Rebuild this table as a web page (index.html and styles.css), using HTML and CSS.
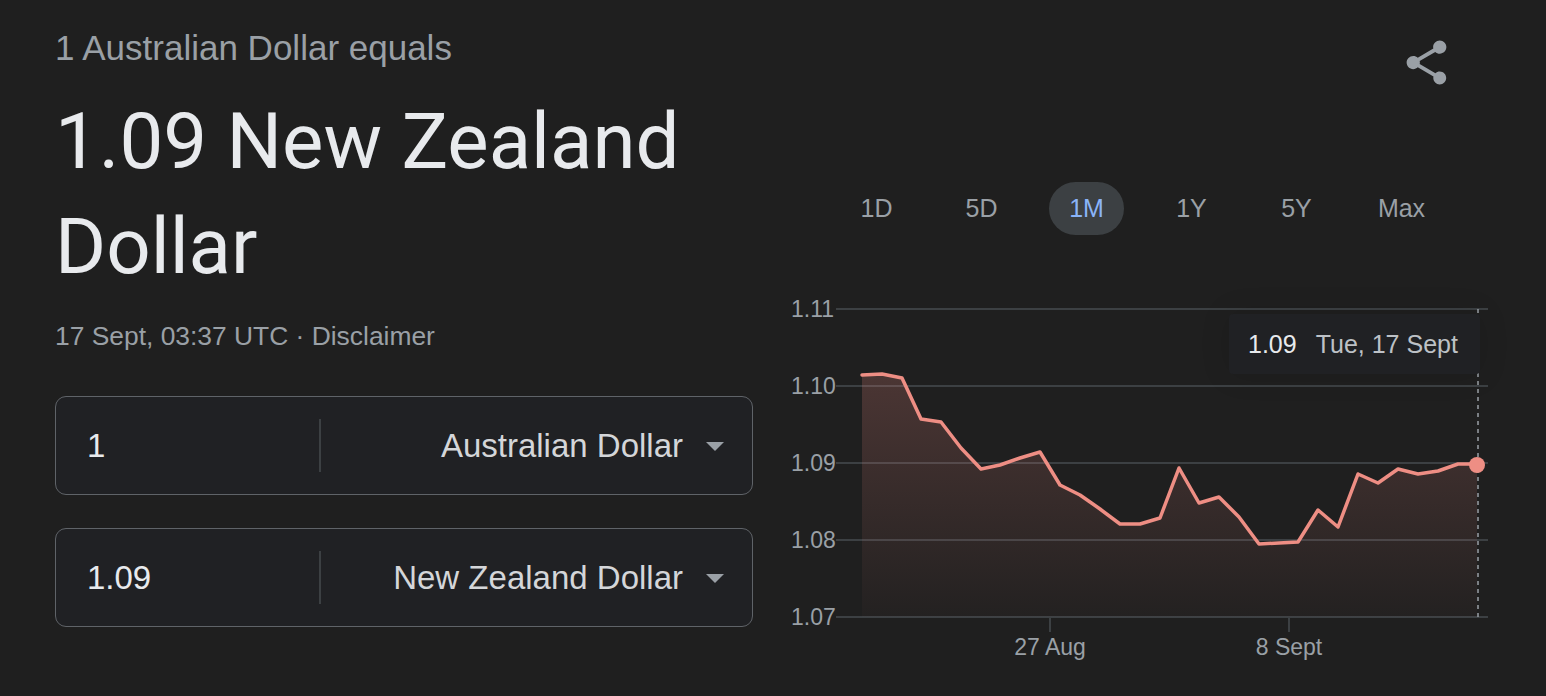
FILE: index.html
```html
<!DOCTYPE html>
<html lang="en">
<head>
<meta charset="utf-8">
<title>AUD to NZD</title>
<link rel="stylesheet" href="styles.css">
</head>
<body>
<div class="page">
  <section class="left">
    <div class="subtitle">1 Australian Dollar equals</div>
    <h1 class="heading">1.09 New Zealand Dollar</h1>
    <div class="date">17 Sept, 03:37 UTC · <span class="disclaimer">Disclaimer</span></div>

    <div class="conv">
      <div class="conv-amount">1</div>
      <div class="conv-divider"></div>
      <div class="conv-currency">
        <span class="conv-name">Australian Dollar</span>
        <span class="caret"></span>
      </div>
    </div>

    <div class="conv conv-second">
      <div class="conv-amount">1.09</div>
      <div class="conv-divider"></div>
      <div class="conv-currency">
        <span class="conv-name">New Zealand Dollar</span>
        <span class="caret"></span>
      </div>
    </div>
  </section>

  <section class="right">
    <div class="share-row">
      <svg class="share" viewBox="0 0 24 24" aria-label="Share">
        <path d="M18 16.08c-.76 0-1.440.3-1.96.77L8.91 12.7c.05-.23.09-.46.09-.7s-.04-.47-.09-.7l7.05-4.11c.54.5 1.25.81 2.040.81 1.66 0 3-1.34 3-3s-1.34-3-3-3-3 1.34-3 3c0 .24.04.47.09.7L8.04 9.81C7.5 9.31 6.79 9 6 9c-1.66 0-3 1.34-3 3s1.34 3 3 3c.79 0 1.5-.31 2.04-.81l7.12 4.16c-.05.21-.08.43-.08.65 0 1.61 1.31 2.92 2.92 2.92 1.61 0 2.92-1.31 2.92-2.92s-1.31-2.920-2.92-2.92z"/>
      </svg>
    </div>

    <div class="tabs">
      <span class="tab">1D</span>
      <span class="tab">5D</span>
      <span class="tab tab-active">1M</span>
      <span class="tab">1Y</span>
      <span class="tab">5Y</span>
      <span class="tab">Max</span>
    </div>

    <div class="chart">
      <svg class="chart-svg" viewBox="0 0 720 380" width="720" height="380">
        <defs>
          <linearGradient id="fillGrad" x1="0" y1="84" x2="0" y2="327" gradientUnits="userSpaceOnUse">
            <stop offset="0" stop-color="#f28b82" stop-opacity="0.21"/>
            <stop offset="1" stop-color="#f28b82" stop-opacity="0.02"/>
          </linearGradient>
        </defs>
        <g class="grid">
          <line x1="56" y1="19" x2="708" y2="19"/>
          <line x1="56" y1="96" x2="708" y2="96"/>
          <line x1="56" y1="173" x2="708" y2="173"/>
          <line x1="56" y1="250" x2="708" y2="250"/>
          <line x1="56" y1="327" x2="708" y2="327"/>
          <line x1="270" y1="327" x2="270" y2="342"/>
          <line x1="509" y1="327" x2="509" y2="342"/>
        </g>
        <g class="ylabels">
          <text x="11" y="27">1.11</text>
          <text x="11" y="104">1.10</text>
          <text x="11" y="181">1.09</text>
          <text x="11" y="258">1.08</text>
          <text x="11" y="335">1.07</text>
        </g>
        <g class="xlabels">
          <text x="270" y="365">27 Aug</text>
          <text x="509" y="365">8 Sept</text>
        </g>
        <polygon class="area" fill="url(#fillGrad)" points="82,85 102,84 122,88 141,129 161,132 181,158 201,179 220,175 240,168 260,162 280,195 300,205 320,219 340,234 360,234 380,228 399,178 419,213 439,207 459,227 479,254 499,253 518,252 538,220 558,237 578,184 598,193 618,179 638,184 658,181 678,174 697,174 697,327 82,327"/>
        <line class="cursor" x1="698" y1="19" x2="698" y2="327"/>
        <polyline class="series" points="82,85 102,84 122,88 141,129 161,132 181,158 201,179 220,175 240,168 260,162 280,195 300,205 320,219 340,234 360,234 380,228 399,178 419,213 439,207 459,227 479,254 499,253 518,252 538,220 558,237 578,184 598,193 618,179 638,184 658,181 678,174 697,174"/>
        <circle class="dot" cx="697" cy="175" r="8"/>
      </svg>
      <div class="tooltip"><span class="tip-value">1.09</span><span class="tip-date">Tue, 17 Sept</span></div>
    </div>
  </section>
</div>
</body>
</html>
```

FILE: styles.css
```css
html, body {
  margin: 0;
  padding: 0;
  background: #1f1f1f;
}

body {
  font-family: "Liberation Sans", Arial, sans-serif;
  color: #e8eaed;
  width: 1546px;
  height: 696px;
  overflow: hidden;
}

.page {
  display: flex;
  padding-left: 55px;
}

.left {
  width: 698px;
  display: flex;
  flex-direction: column;
  padding-top: 28px;
}

.subtitle {
  font-size: 35px;
  line-height: 40px;
  color: #9aa0a6;
}

.heading {
  margin: 21px 0 0 0;
  font-family: Roboto, "Liberation Sans", sans-serif;
  font-weight: 400;
  font-size: 78px;
  line-height: 105px;
  color: #e8eaed;
  width: 660px;
}

.date {
  margin-top: 22px;
  font-size: 26.4px;
  line-height: 30px;
  color: #9aa0a6;
}

.conv {
  box-sizing: border-box;
  margin-top: 45px;
  height: 99px;
  border: 1.5px solid #5f6368;
  border-radius: 11px;
  background: #202124;
  display: flex;
  align-items: center;
}

.conv-second {
  margin-top: 33px;
}

.conv-amount {
  width: 232px;
  padding-left: 31px;
  font-size: 33px;
  color: #e8eaed;
}

.conv-divider {
  width: 1.5px;
  height: 53px;
  background: #3c4043;
}

.conv-currency {
  flex: 1;
  display: flex;
  align-items: center;
  justify-content: flex-end;
  padding-right: 28px;
}

.conv-name {
  font-size: 33px;
  color: #d4d6d9;
}

.caret {
  margin-left: 23px;
  width: 0;
  height: 0;
  border-left: 9px solid transparent;
  border-right: 9px solid transparent;
  border-top: 9px solid #9aa0a6;
  margin-top: 2px;
}

.right {
  width: 720px;
  margin-left: 27px;
  display: flex;
  flex-direction: column;
}

.share-row {
  display: flex;
  justify-content: flex-end;
  padding-top: 36px;
  padding-right: 47px;
}

.share {
  width: 53px;
  height: 53px;
  fill: #9aa0a6;
  display: block;
}

.tabs {
  display: flex;
  gap: 30px;
  padding-left: 59px;
  margin-top: 93px;
}

.tab {
  width: 75px;
  height: 53px;
  border-radius: 27px;
  display: flex;
  align-items: center;
  justify-content: center;
  font-size: 25px;
  color: #9aa0a6;
}

.tab-active {
  background: #3c4043;
  color: #8ab4f8;
}

.chart {
  position: relative;
  margin-top: 55px;
  width: 720px;
  height: 380px;
}

.chart-svg {
  display: block;
}

.grid line {
  stroke: #3c4043;
  stroke-width: 2;
}

.ylabels text,
.xlabels text {
  font-family: "Liberation Sans", Arial, sans-serif;
  font-size: 23px;
  fill: #9aa0a6;
}

.xlabels text {
  text-anchor: middle;
}

.cursor {
  stroke: #9aa0a6;
  stroke-width: 1.5;
  stroke-dasharray: 4 4;
}

.series {
  fill: none;
  stroke: #ee8e84;
  stroke-width: 3.5;
  stroke-linejoin: round;
  stroke-linecap: round;
}

.dot {
  fill: #ee8e84;
}

.tooltip {
  position: absolute;
  left: 449px;
  top: 24px;
  width: 232px;
  height: 60px;
  padding-left: 19px;
  background: #202124;
  border-radius: 4px;
  box-shadow: 0 0 30px rgba(0, 0, 0, 0.12);
  display: flex;
  align-items: center;
  font-size: 25px;
}

.tip-value {
  color: #e8eaed;
  margin-right: 19px;
}

.tip-date {
  color: #bdc1c6;
}
```
